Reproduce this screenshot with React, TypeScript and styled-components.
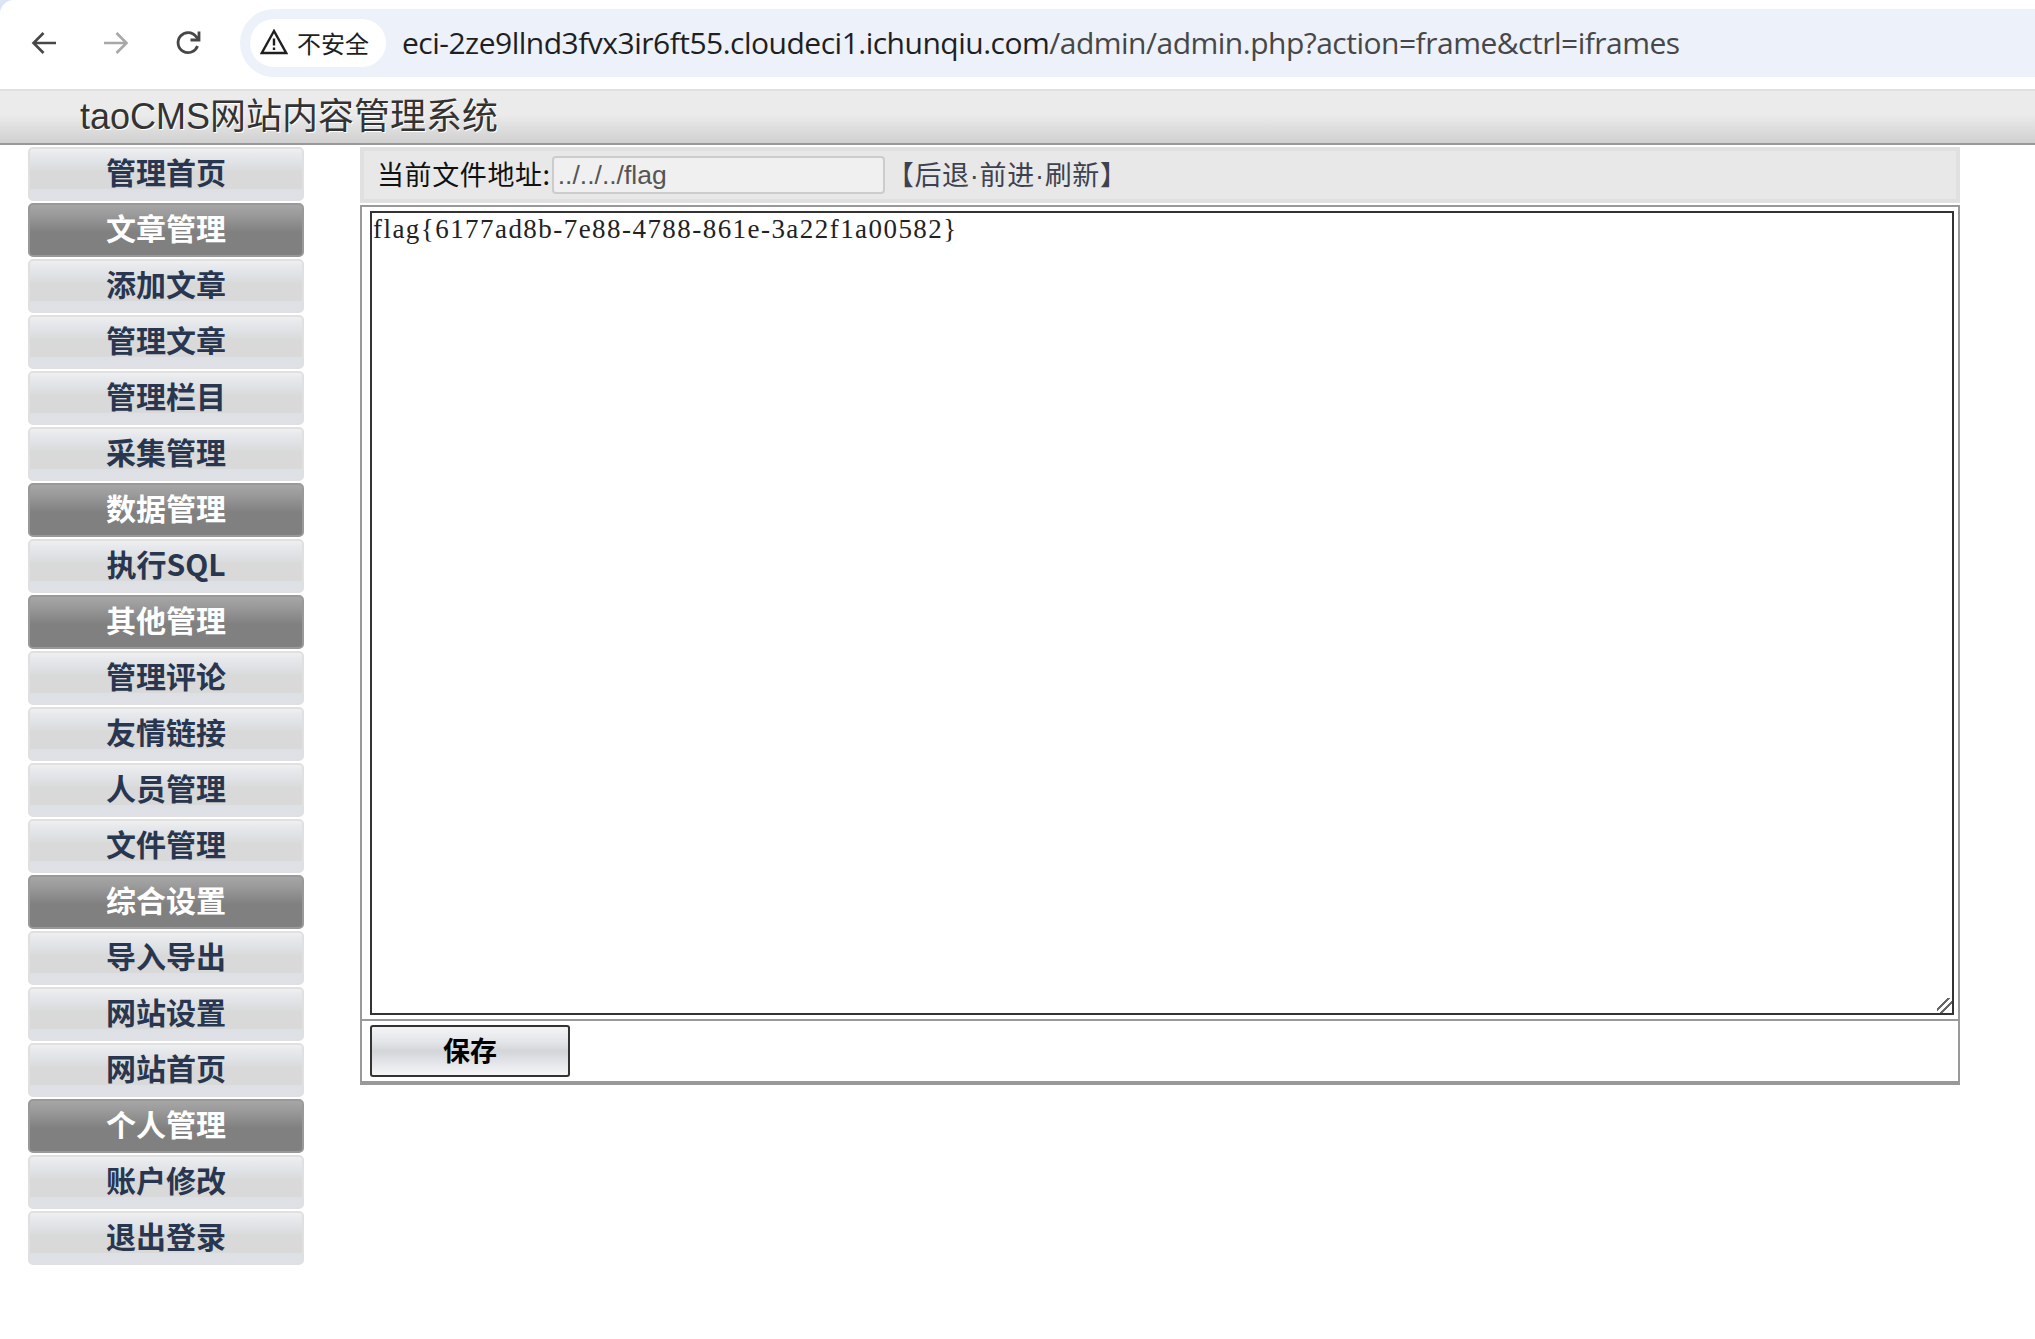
import React from "react";
import styled, { createGlobalStyle } from "styled-components";

const Global = createGlobalStyle`
  html, body { margin: 0; padding: 0; background: #fff; }
  body { font-family: "Liberation Sans", "Noto Sans CJK SC", sans-serif; }
  * { box-sizing: border-box; }
`;

const Page = styled.div`
  width: 2035px;
  height: 1339px;
  overflow: hidden;
  background: #fff;
`;

const Chrome = styled.div`
  height: 89px;
  background: #dbe5f6;
`;

const ChromeInner = styled.div`
  height: 89px;
  background: #fff;
  border-top-left-radius: 14px;
  display: flex;
  align-items: flex-start;
  padding: 9px 0 0 30px;
`;

const NavIcon = styled.svg<{ $mr: number }>`
  width: 28px;
  height: 28px;
  margin-top: 20px;
  margin-right: ${(p) => p.$mr}px;
  flex: none;
`;

const Omnibox = styled.div`
  flex: 1;
  height: 68px;
  background: #ecf1fa;
  border-radius: 34px 0 0 34px;
  display: flex;
  align-items: center;
  padding-left: 10px;
`;

const Chip = styled.div`
  width: 136px;
  height: 48px;
  border-radius: 24px;
  background: #fff;
  display: flex;
  align-items: center;
  gap: 9px;
  padding: 0 0 2px 10px;
  font: 24px "Noto Sans CJK SC", sans-serif;
  color: #1f1f1f;
`;

const Url = styled.div`
  margin: -2px 0 0 16px;
  font: 30px "Open Sans", "Noto Sans", sans-serif;
  color: #1f1f1f;
  white-space: nowrap;
  letter-spacing: -0.5px;
`;

const UrlPath = styled.span`
  color: #474747;
`;

const Header = styled.div`
  height: 56px;
  border-top: 2px solid #e0e0e0;
  border-bottom: 2px solid #999;
  background: linear-gradient(#ebebeb 0%, #ebebeb 45%, #d0d0d0 100%);
  padding-left: 80px;
  font-size: 36px;
  line-height: 52px;
  color: #333;
  text-shadow: 1px 1px 0 #fff;
  margin-bottom: 2px;
`;

const Body = styled.div`
  display: flex;
  align-items: flex-start;
  padding-left: 28px;
`;

const Sidebar = styled.nav`
  width: 276px;
  display: flex;
  flex-direction: column;
  gap: 2px;
  margin-right: 56px;
`;

const MenuItem = styled.div<{ $group?: boolean }>`
  height: 54px;
  border: 2px solid ${(p) => (p.$group ? "#999" : "#e0e0e0")};
  border-radius: 5px;
  background: ${(p) =>
    p.$group
      ? "linear-gradient(#a6a6a6 0%, #9a9a9a 20%, #808080 55%, #808080 100%)"
      : "linear-gradient(#f0f0f2 0%, #e8e9ec 10%, #dfe2e6 28%, #d9d9d9 45%, #d9d9d9 80%, #dde0e5 81%, #dfe1e6 100%)"};
  color: ${(p) => (p.$group ? "#fff" : "#283650")};
  font: bold 30px/44px "Noto Sans CJK SC", sans-serif;
  text-align: center;
`;

const Main = styled.main`
  width: 1600px;
`;

const Toolbar = styled.div`
  height: 56px;
  margin-bottom: 2px;
  border: 4px solid #e0e0e0;
  background: #e8e8e8;
  display: flex;
  align-items: center;
  padding-left: 13px;
  font: 27px "Noto Sans CJK SC", sans-serif;
  color: #111;
`;

const Label = styled.span`
  letter-spacing: 0.6px;
  padding-bottom: 3px;
`;

const PathInput = styled.input`
  width: 333px;
  height: 38px;
  margin-left: 1px;
  padding: 0 4px;
  border: 2px solid #ccc;
  border-radius: 4px;
  background: #f0f0f0;
  color: #555;
  font: 26.500px "Liberation Sans", sans-serif;
  outline: none;
`;

const ToolLinks = styled.span`
  margin-left: 2px;
  padding-bottom: 3px;
  color: #3d4250;
  letter-spacing: 0.7px;
`;

const Dot = styled.span`
  font-family: "Liberation Sans", sans-serif;
`;

const EditorBox = styled.form`
  height: 880px;
  border: 2px solid #999;
  border-bottom-width: 4px;
  margin: 0;
`;

const EditorArea = styled.div`
  height: 814px;
  padding: 4px 4px 0 8px;
  border-bottom: 2px solid #999;
`;

const Editor = styled.textarea`
  display: block;
  width: 100%;
  height: 804px;
  border: 2px solid #333;
  border-radius: 0;
  padding: 1px;
  font: 27px/31px "Liberation Serif", "Noto Sans CJK SC", serif;
  letter-spacing: 1.450px;
  color: #222;
  outline: none;

  &::-webkit-resizer {
    background: linear-gradient(
      135deg,
      transparent 36%,
      #666 36%,
      #666 44%,
      transparent 44%,
      transparent 59%,
      #666 59%,
      #666 67%,
      transparent 67%
    );
  }
`;

const SaveRow = styled.div`
  padding: 4px 8px;
`;

const SaveButton = styled.button`
  display: block;
  width: 200px;
  height: 52px;
  border: 2px solid #333;
  border-radius: 3px;
  background: linear-gradient(#f4f4f6 0%, #e4e6ea 30%, #d4d5d8 50%, #dfe1e6 68%, #f6f6f8 100%);
  color: #000;
  font: bold 27px "Noto Sans CJK SC", sans-serif;
  padding: 0 0 4px;
`;

const menu: [string, boolean?][] = [
  ["管理首页"],
  ["文章管理", true],
  ["添加文章"],
  ["管理文章"],
  ["管理栏目"],
  ["采集管理"],
  ["数据管理", true],
  ["执行SQL"],
  ["其他管理", true],
  ["管理评论"],
  ["友情链接"],
  ["人员管理"],
  ["文件管理"],
  ["综合设置", true],
  ["导入导出"],
  ["网站设置"],
  ["网站首页"],
  ["个人管理", true],
  ["账户修改"],
  ["退出登录"],
];

export default function App() {
  return (
    <Page>
      <Global />
      <Chrome>
        <ChromeInner>
          <NavIcon $mr={44} viewBox="0 0 28 28" fill="none" stroke="#474747" strokeWidth="2.6">
            <path d="M26 14H4M13.5 4 3.5 14l10 10" />
          </NavIcon>
          <NavIcon $mr={44} viewBox="0 0 28 28" fill="none" stroke="#a8a8a8" strokeWidth="2.6">
            <path d="M2 14h22M14.500 4l10 10-10 10" />
          </NavIcon>
          <NavIcon $mr={38} viewBox="0 0 28 28" fill="none" stroke="#474747" strokeWidth="2.8">
            <path d="M23.500 17a10 10 0 1 1-1.500-9.500L24.500 10" />
            <path d="M25 2.500V11h-8.500" />
          </NavIcon>
          <Omnibox>
            <Chip>
              <svg width="28" height="26" viewBox="0 0 28 26" fill="none">
                <path d="M14 2 1.800 24h24.400Z" stroke="#1f1f1f" strokeWidth="2.400" strokeLinejoin="miter" />
                <path d="M14 9.500v7M14 18.500v2.500" stroke="#1f1f1f" strokeWidth="2.400" />
              </svg>
              不安全
            </Chip>
            <Url>
              eci-2ze9llnd3fvx3ir6ft55.cloudeci1.ichunqiu.com
              <UrlPath>/admin/admin.php?action=frame&amp;ctrl=iframes</UrlPath>
            </Url>
          </Omnibox>
        </ChromeInner>
      </Chrome>
      <Header>taoCMS网站内容管理系统</Header>
      <Body>
        <Sidebar>
          {menu.map(([label, group]) => (
            <MenuItem key={label} $group={group}>
              {label}
            </MenuItem>
          ))}
        </Sidebar>
        <Main>
          <Toolbar>
            <Label>当前文件地址:</Label>
            <PathInput defaultValue="../../../flag" />
            <ToolLinks>
              【后退<Dot>·</Dot>前进<Dot>·</Dot>刷新】
            </ToolLinks>
          </Toolbar>
          <EditorBox>
            <EditorArea>
              <Editor defaultValue="flag{6177ad8b-7e88-4788-861e-3a22f1a00582}" spellCheck={false} />
            </EditorArea>
            <SaveRow>
              <SaveButton type="button">保存</SaveButton>
            </SaveRow>
          </EditorBox>
        </Main>
      </Body>
    </Page>
  );
}
